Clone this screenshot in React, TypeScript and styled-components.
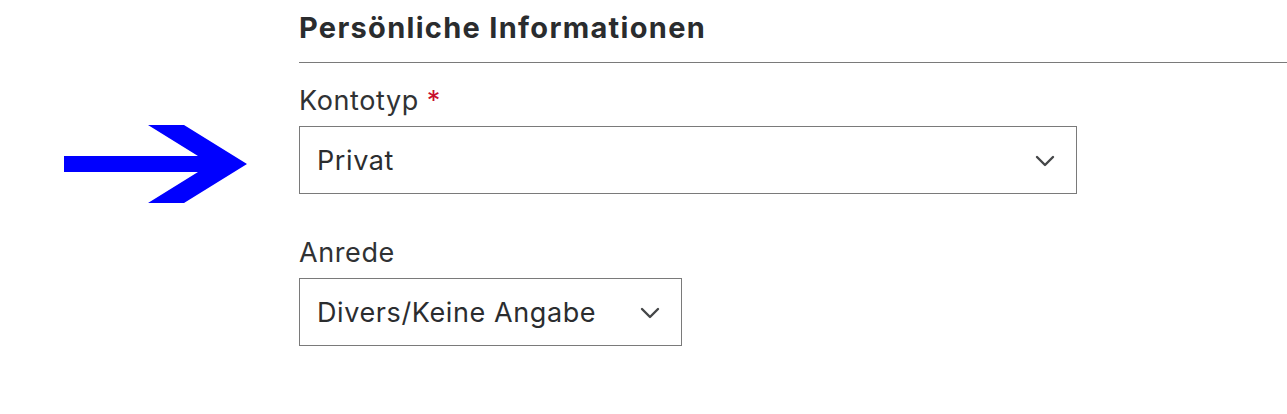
import React from "react";
import styled, {createGlobalStyle} from "styled-components";

const GlobalStyle = createGlobalStyle`
  html, body {
    margin: 0;
    padding: 0;
    background: #ffffff;
  }

  body {
    font-family: Inter, "Noto Sans", "Liberation Sans", sans-serif;
    color: #2b2d2f;
  }
`;

const Page = styled.main`
  width: 1287px;
  height: 414px;
  overflow: hidden;
  padding-top: 11px;
  box-sizing: border-box;
`;

const Section = styled.section`
  display: flex;
  flex-direction: column;
`;

const Header = styled.header`
  margin-left: 299px;
  border-bottom: 1px solid #7a7a7a;
  padding-bottom: 17px;
`;

const Title = styled.h2`
  margin: 0;
  font-size: 29px;
  line-height: 34px;
  font-weight: 700;
  letter-spacing: 1.3px;
  color: #2a2c2e;
`;

const FieldRow = styled.div<{$top: number}>`
  display: grid;
  grid-template-columns: 299px auto;
  grid-template-rows: auto auto;
  row-gap: 8px;
  margin-top: ${(p) => p.$top}px;
  justify-content: start;
`;

const Marker = styled.div`
  grid-column: 1;
  grid-row: 2;
  align-self: start;
  margin-top: -1px;
  padding-left: 64px;
  height: 68px;
`;

const Label = styled.label`
  grid-column: 2;
  grid-row: 1;
  font-size: 27px;
  line-height: 35px;
  font-weight: 400;
  letter-spacing: 0.6px;
  color: #303234;
`;

const Required = styled.span`
  color: #c8102e;
  margin-left: 8px;
`;

const SelectBox = styled.div<{$width: number}>`
  grid-column: 2;
  grid-row: 2;
  display: flex;
  align-items: center;
  justify-content: space-between;
  gap: 24px;

  width: ${(p) => p.$width}px;
  height: 68px;
  box-sizing: border-box;

  padding: 0 21px 0 17px;

  border: 1px solid #7a7a7a;
  background: #ffffff;

  font-size: 27px;
  letter-spacing: 0.6px;
  white-space: nowrap;
  color: #2b2d2f;
`;

const Chevron = styled.svg`
  flex: none;
  width: 20px;
  height: 12px;
  margin-top: 1px;
`;

const BlueArrow = () => (
  <svg width="183" height="78" viewBox="0 0 183 78">
    <polygon
      fill="#0000ff"
      points="0,31 134,31 84,0 120,0 183,39 120,78 84,78 134,47 0,47"
    />
  </svg>
);

const ChevronDown = () => (
  <Chevron viewBox="0 0 20 12">
    <polyline
      fill="none"
      points="2,2 10,10 18,2"
      stroke="#444648"
      strokeLinecap="round"
      strokeLinejoin="round"
      strokeWidth="2.4"
    />
  </Chevron>
);

const App: React.FC = () => {
  return (
    <>
      <GlobalStyle />
      <Page>
        <Section>
          <Header>
            <Title>Persönliche Informationen</Title>
          </Header>
          <FieldRow $top={20}>
            <Label>
              Kontotyp<Required>*</Required>
            </Label>
            <Marker>
              <BlueArrow />
            </Marker>
            <SelectBox $width={778} role="combobox">
              <span>Privat</span>
              <ChevronDown />
            </SelectBox>
          </FieldRow>
          <FieldRow $top={41}>
            <Label>Anrede</Label>
            <SelectBox $width={383} role="combobox">
              <span>Divers/Keine Angabe</span>
              <ChevronDown />
            </SelectBox>
          </FieldRow>
        </Section>
      </Page>
    </>
  );
};

export default App;
